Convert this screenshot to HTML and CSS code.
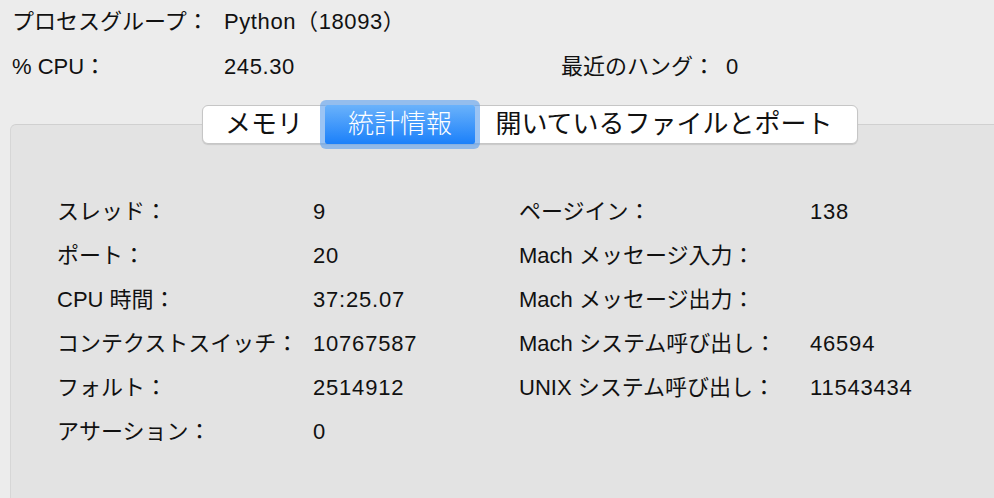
FILE: index.html
```html
<!DOCTYPE html>
<html lang="ja">
<head>
    <meta charset="UTF-8">
    <title>統計情報</title>
    <link rel="stylesheet" href="styles.css">
</head>
<body>
    <!-- プロセス情報 -->
    <div class="info">
        <div class="info-row">
            <span class="info-label">プロセスグループ：</span>
            <span class="info-value">Python（18093）</span>
        </div>
        <div class="info-row">
            <span class="info-label">% CPU：</span>
            <span class="info-value cpu-value">245.30</span>
            <span class="info-label hang-label">最近のハング：</span>
            <span class="info-value">0</span>
        </div>
    </div>

    <!-- タブ -->
    <div class="tabs">
        <div class="tab tab-memory">メモリ</div>
        <div class="tab tab-stats active">統計情報</div>
        <div class="tab tab-files">開いているファイルとポート</div>
    </div>

    <!-- パネル -->
    <div class="panel">
        <div class="stats">
            <span>スレッド：</span><span class="num">9</span>
            <span>ページイン：</span><span class="num">138</span>

            <span>ポート：</span><span class="num">20</span>
            <span>Mach メッセージ入力：</span><span></span>

            <span>CPU 時間：</span><span class="num">37:25.07</span>
            <span>Mach メッセージ出力：</span><span></span>

            <span>コンテクストスイッチ：</span><span class="num">10767587</span>
            <span>Mach システム呼び出し：</span><span class="num">46594</span>

            <span>フォルト：</span><span class="num">2514912</span>
            <span>UNIX システム呼び出し：</span><span class="num">11543434</span>

            <span>アサーション：</span><span class="num">0</span>
            <span></span><span></span>
        </div>
    </div>
</body>
</html>
```

FILE: styles.css
```css
* {
    margin: 0;
    padding: 0;
    box-sizing: border-box;
}

html, body {
    height: 100%;
}

body {
    font-family: "Liberation Sans", "Noto Sans CJK JP", sans-serif;
    font-size: 22px;
    color: #111;
    background-color: #ececec;
    overflow: hidden;
}

/* プロセス情報 */
.info {
    padding-left: 12px;
}

.info-row {
    display: flex;
    height: 45px;
    line-height: 43px;
    white-space: nowrap;
}

.info-label {
    width: 212px;
}

.info-value {
    width: 125px;
    letter-spacing: 0.6px;
}

.cpu-value {
    width: 337px;
}

.hang-label {
    width: 165px;
}

/* タブ */
.tabs {
    position: relative;
    z-index: 2;
    display: flex;
    width: 656px;
    height: 39px;
    margin: 15px 0 0 202px;
    background-color: #fff;
    border: 1px solid #c6c6c6;
    border-radius: 6px;
    box-shadow: 0 1px 1px rgba(0, 0, 0, 0.12);
}

.tab {
    font-size: 26px;
    line-height: 37px;
    text-align: center;
    white-space: nowrap;
}

.tab-memory {
    width: 122px;
}

.tab-stats {
    width: 150px;
}

.tab-files {
    flex: 1;
    padding-right: 4px;
}

.tab.active {
    position: relative;
    color: #fff;
    font-weight: 300;
    margin: -1px 0;
    line-height: 39px;
    height: 39px;
    background: linear-gradient(#6ab2fb, #1b80fa);
    box-shadow: 0 0 0 5px rgba(94, 160, 238, 0.62);
    border-radius: 2px;
}

/* パネル */
.panel {
    margin: -20px 0 0 10px;
    height: 374px;
    background-color: #e3e3e3;
    border-top: 1px solid #d0d0d0;
    border-left: 1px solid #d6d6d6;
    border-radius: 6px 0 0 0;
    padding: 64px 0 0 46px;
}

.stats {
    display: grid;
    grid-template-columns: 256px 206px 291px auto;
    grid-auto-rows: 44px;
    line-height: 46px;
    white-space: nowrap;
}

.stats .num {
    letter-spacing: 0.8px;
}
```
